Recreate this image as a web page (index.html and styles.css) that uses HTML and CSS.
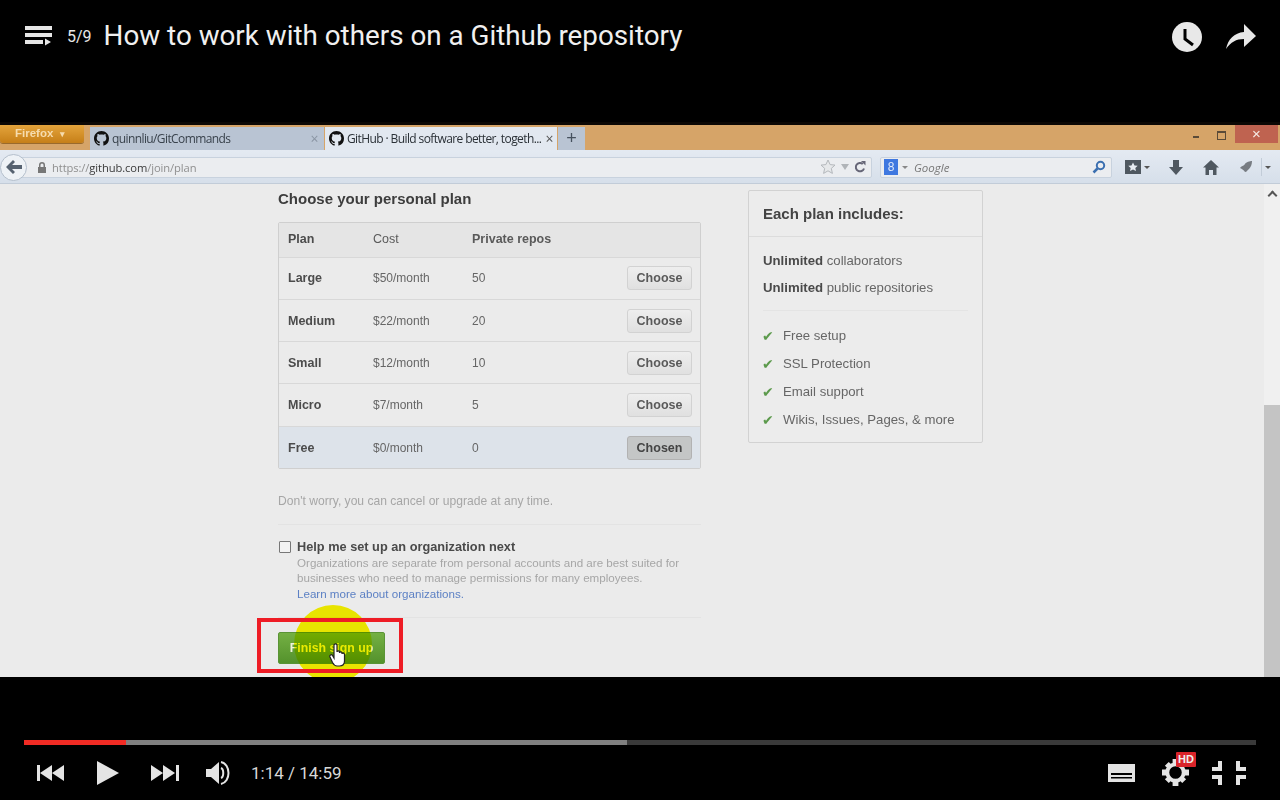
FILE: index.html
```html
<!DOCTYPE html>
<html lang="en">
<head>
    <meta charset="UTF-8">
    <title>How to work with others on a Github repository</title>
    <link rel="stylesheet" href="styles.css">
</head>
<body>
    <!-- Top bar -->
    <header class="top-bar">
        <svg class="playlist-icon" width="28" height="20" viewBox="0 0 28 20"><path fill="#e6e6e6" d="M0 0h27v4H0zM0 7h27v4H0zM0 14h18v4H0zM20 12.500l6 3.500-6 3.500z"/></svg>
        <span class="playlist-count">5/9</span>
        <h1 class="video-title">How to work with others on a Github repository</h1>
        <div class="top-actions">
            <svg width="30" height="30" viewBox="0 0 30 30"><circle cx="15" cy="15" r="15" fill="#e8e8e8"/><path fill="none" stroke="#000" stroke-width="3" d="M13 7v10l8 6"/></svg>
            <svg width="30" height="26" viewBox="0 0 30 26"><path fill="#e8e8e8" d="M0 25C2 15 8 9 18 8V0l12 12-12 11v-8C10 15 5 18 0 25z"/></svg>
        </div>
    </header>

    <!-- Video frame -->
    <main class="video">
        <div class="browser-frame">
            <div class="title-bar">
                <div class="firefox-btn">Firefox <span class="caret">&#9662;</span></div>
                <div class="tab tab-inactive">
                    <svg class="octocat" viewBox="0 0 16 16"><path d="M8 0C3.580 0 0 3.580 0 8c0 3.540 2.290 6.530 5.470 7.590.4.070.55-.17.55-.38 0-.19-.01-.82-.01-1.490-2.010.37-2.530-.49-2.690-.94-.09-.23-.48-.94-.82-1.130-.28-.15-.68-.52-.01-.53.63-.01 1.080.58 1.230.82.72 1.210 1.870.87 2.330.66.070-.52.28-.87.51-1.070-1.780-.2-3.640-.89-3.640-3.950 0-.87.31-1.590.82-2.150-.08-.2-.36-1.020.08-2.120 0 0 .67-.21 2.200.82.64-.18 1.320-.27 2-.27s1.360.09 2 .27c1.530-1.040 2.200-.82 2.200-.82.44 1.100.16 1.920.08 2.120.51.56.82 1.270.82 2.150 0 3.070-1.870 3.750-3.650 3.950.29.25.54.73.54 1.480 0 1.070-.01 1.930-.01 2.200 0 .21.15.46.55.38A8.010 8.010 0 0 0 16 8c0-4.420-3.580-8-8-8z"/></svg>
                    <span class="tab-label">quinnliu/GitCommands</span>
                    <span class="tab-close dim">&times;</span>
                </div>
                <div class="tab tab-active">
                    <svg class="octocat" viewBox="0 0 16 16"><path d="M8 0C3.580 0 0 3.580 0 8c0 3.540 2.290 6.530 5.470 7.590.4.070.55-.17.55-.38 0-.19-.01-.82-.01-1.490-2.010.37-2.530-.49-2.690-.94-.09-.23-.48-.94-.82-1.130-.28-.15-.68-.52-.01-.53.63-.01 1.080.58 1.230.82.72 1.210 1.870.87 2.330.66.070-.52.28-.87.51-1.070-1.780-.2-3.640-.89-3.640-3.950 0-.87.31-1.590.82-2.150-.08-.2-.36-1.020.08-2.120 0 0 .67-.21 2.200.82.64-.18 1.320-.27 2-.27s1.360.09 2 .27c1.530-1.040 2.200-.82 2.200-.82.44 1.100.16 1.920.08 2.120.51.56.82 1.270.82 2.150 0 3.070-1.870 3.750-3.650 3.950.29.25.54.73.54 1.480 0 1.070-.01 1.930-.01 2.200 0 .21.15.46.55.38A8.010 8.010 0 0 0 16 8c0-4.420-3.580-8-8-8z"/></svg>
                    <span class="tab-label">GitHub &middot; Build software better, togeth...</span>
                    <span class="tab-close">&times;</span>
                </div>
                <div class="tab-new">+</div>
                <div class="window-controls">
                    <span class="win-min"></span>
                    <span class="win-restore"></span>
                    <span class="win-close">&times;</span>
                </div>
            </div>

            <div class="nav-bar">
                <div class="back-btn">
                    <svg width="16" height="14" viewBox="0 0 16 14"><path fill="#566270" d="M7 0l2 2-3 3h10v4H6l3 3-2 2-7-7z"/></svg>
                </div>
                <div class="url-bar">
                    <svg width="10" height="11" viewBox="0 0 10 11"><path fill="#777" d="M2 5V3a3 3 0 0 1 6 0v2h1v6H1V5zm1.500 0h3V3a1.500 1.500 0 0 0-3 0z"/></svg>
                    <span class="url-text">https://<b>github.com</b>/join/plan</span>
                    <div class="url-icons">
                        <svg width="16" height="16" viewBox="0 0 16 16"><path fill="#e6e8ea" stroke="#b4b8bc" d="M8 1l2.100 4.600 4.900.5-3.700 3.300 1.100 5L8 11.800l-4.400 2.600 1.100-5L1 6.100l4.900-.5z"/></svg>
                        <span class="url-arrow"></span>
                        <svg width="12" height="12" viewBox="0 0 12 12"><path fill="none" stroke="#667" stroke-width="2" d="M10 7.500A4.200 4.200 0 1 1 8.800 3"/><path fill="#667" d="M7 0l4.500 0v4.500z"/></svg>
                    </div>
                </div>
                <div class="search-bar">
                    <span class="search-logo">8</span>
                    <span class="search-caret"></span>
                    <span class="search-text">Google</span>
                    <svg class="search-icon" width="14" height="14" viewBox="0 0 14 14"><circle cx="8.500" cy="5.500" r="3.700" fill="none" stroke="#3b6fb0" stroke-width="2"/><path stroke="#3b6fb0" stroke-width="2.500" d="M5.500 8.500L1.500 12.500"/></svg>
                </div>
                <div class="toolbar-icons">
                    <svg class="bookmarks-icon" width="16" height="14" viewBox="0 0 16 14"><path fill="#4f5860" d="M0 0h16v14H0z"/><path fill="#e8edf2" d="M8 2.500l1.500 3 3.200.3-2.400 2.100.7 3.100L8 9.400 5 11l.7-3.100-2.400-2.100 3.200-.3z"/></svg>
                    <span class="tool-caret"></span>
                    <svg class="download-icon" width="14" height="15" viewBox="0 0 14 15"><path fill="#4f5860" d="M4 0h6v7h4l-7 8-7-8h4z"/></svg>
                    <svg class="home-icon" width="16" height="15" viewBox="0 0 16 15"><path fill="#4f5860" d="M8 0l8 7.500h-2.500V15h-3.500v-5H6v5H2.500V7.500H0z"/></svg>
                    <svg class="ext-icon" width="16" height="14" viewBox="0 0 16 14"><path fill="#777c82" d="M3 8c1-2 4-2 5-4 1-2 5-3 7-3 0 3-1 6-3 8-2 1-2 3-4 3-1-2-3-3-5-4z"/></svg>
                    <span class="tool-sep"></span>
                    <span class="tool-caret"></span>
                </div>
            </div>

            <div class="page">
                <div class="page-content">
                    <section class="plan-col">
                        <h2 class="plan-heading">Choose your personal plan</h2>
                        <div class="plan-table">
                            <div class="plan-row plan-head">
                                <span class="col-plan">Plan</span>
                                <span class="col-cost">Cost</span>
                                <span class="col-repos">Private repos</span>
                            </div>
                            <div class="plan-row">
                                <span class="col-plan">Large</span>
                                <span class="col-cost">$50/month</span>
                                <span class="col-repos">50</span>
                                <button class="choose-btn">Choose</button>
                            </div>
                            <div class="plan-row">
                                <span class="col-plan">Medium</span>
                                <span class="col-cost">$22/month</span>
                                <span class="col-repos">20</span>
                                <button class="choose-btn">Choose</button>
                            </div>
                            <div class="plan-row">
                                <span class="col-plan">Small</span>
                                <span class="col-cost">$12/month</span>
                                <span class="col-repos">10</span>
                                <button class="choose-btn">Choose</button>
                            </div>
                            <div class="plan-row">
                                <span class="col-plan">Micro</span>
                                <span class="col-cost">$7/month</span>
                                <span class="col-repos">5</span>
                                <button class="choose-btn">Choose</button>
                            </div>
                            <div class="plan-row plan-free">
                                <span class="col-plan">Free</span>
                                <span class="col-cost">$0/month</span>
                                <span class="col-repos">0</span>
                                <button class="choose-btn chosen">Chosen</button>
                            </div>
                        </div>
                        <p class="plan-note">Don't worry, you can cancel or upgrade at any time.</p>
                        <div class="org-block">
                            <span class="org-check"></span>
                            <div class="org-text">
                                <strong>Help me set up an organization next</strong>
                                <p>Organizations are separate from personal accounts and are best suited for businesses who need to manage permissions for many employees.</p>
                                <a href="#">Learn more about organizations.</a>
                            </div>
                        </div>
                        <div class="finish-wrap">
                            <button class="finish-btn">Finish sign up</button>
                            <span class="click-spot"></span>
                            <span class="red-box"></span>
                            <svg class="hand-cursor" width="18" height="24" viewBox="0 0 18 24"><path fill="#fff" stroke="#222" stroke-width="1.200" d="M5 2c0-1.500 3-1.500 3 0v7c0-1.500 2.500-1.500 2.500 0v1c0-1.500 2.500-1.500 2.500 0v1c0-1.200 2.500-1.200 2.500 .5V18c0 3-2 5-5 5H8c-2.500 0-3.500-1.500-4.500-3.500L1 14c-.8-2 1.500-3 2.500-1.500L5 15z"/></svg>
                        </div>
                    </section>

                    <aside class="includes-card">
                        <h3 class="includes-title">Each plan includes:</h3>
                        <div class="includes-body">
                            <p><b>Unlimited</b> collaborators</p>
                            <p><b>Unlimited</b> public repositories</p>
                        </div>
                        <ul class="includes-list">
                            <li>Free setup</li>
                            <li>SSL Protection</li>
                            <li>Email support</li>
                            <li>Wikis, Issues, Pages, &amp; more</li>
                        </ul>
                    </aside>
                </div>
                <div class="scrollbar">
                    <span class="scroll-up"></span>
                    <span class="scroll-thumb"></span>
                </div>
            </div>
        </div>
    </main>

    <!-- Player controls -->
    <footer class="controls">
        <div class="progress">
            <div class="progress-loaded"></div>
            <div class="progress-played"></div>
        </div>
        <div class="control-row">
            <svg class="ctl-prev" width="28" height="16" viewBox="0 0 28 16"><path fill="#e4e4e4" d="M0 0h3v16H0zM3 8l12-8v16zM15 8l12-8v16z"/></svg>
            <svg class="ctl-play" width="22" height="24" viewBox="0 0 22 24"><path fill="#e4e4e4" d="M0 0l22 12L0 24z"/></svg>
            <svg class="ctl-next" width="28" height="16" viewBox="0 0 28 16"><path fill="#e4e4e4" d="M0 0l12 8-12 8zM12 0l12 8-12 8zM25 0h3v16h-3z"/></svg>
            <svg class="ctl-volume" width="25" height="24" viewBox="0 0 25 24"><path fill="#e4e4e4" d="M0 8h5l8-7v22l-8-7H0z"/><path fill="none" stroke="#e4e4e4" stroke-width="2" d="M15 7c3 1 3 9 0 10M15 1c10 2 10 20 0 22"/></svg>
            <span class="time">1:14 / 14:59</span>
            <div class="control-right">
                <svg class="ctl-captions" width="27" height="18" viewBox="0 0 27 18"><path fill="#e4e4e4" d="M0 0h27v18H0z"/><path fill="#000" d="M3 9h21v2H3zM3 13h21v1.500H3z"/></svg>
                <div class="settings">
                    <svg width="27" height="27" viewBox="0 0 28 28"><g fill="#e4e4e4"><path d="M11 0h6v5h-6zM11 23h6v5h-6zM0 11h5v6H0zM23 11h5v6h-5z"/><path d="M3 7l4-4 4 4-4 4zM17 7l4-4 4 4-4 4zM3 21l4-4 4 4-4 4zM17 21l4-4 4 4-4 4z"/></g><circle cx="14" cy="14" r="8.500" fill="none" stroke="#e4e4e4" stroke-width="4"/></svg>
                    <span class="hd-badge">HD</span>
                </div>
                <svg width="34" height="24" viewBox="0 0 34 24"><path fill="#e4e4e4" d="M6 0h4v10H0V6h6zM24 0h4v6h6v4H24zM0 14h10v10H6v-6H0zM24 14h10v4h-6v6h-4z"/></svg>
            </div>
        </div>
    </footer>
</body>
</html>
```

FILE: styles.css
```css
* {
    box-sizing: border-box;
}

body {
    margin: 0;
    width: 1280px;
    height: 800px;
    overflow: hidden;
    background: #000;
    font-family: 'Liberation Sans', Arial, sans-serif;
    display: flex;
    flex-direction: column;
}

/* Top bar */
.top-bar {
    height: 122px;
    flex: none;
    display: flex;
    align-items: flex-start;
    padding: 18px 24px 0 25px;
    color: #e8e8e8;
    font-family: Roboto, sans-serif;
}

.playlist-icon {
    margin-top: 8px;
}

.playlist-count {
    margin: 9px 0 0 14px;
    font-size: 16px;
    line-height: 19px;
}

.video-title {
    margin: 1px 0 0 12px;
    font-size: 27.800px;
    font-weight: 400;
    line-height: 34px;
    color: #f0f0f0;
}

.top-actions {
    margin-left: auto;
    display: flex;
    align-items: center;
    gap: 24px;
    padding-top: 4px;
}

/* Video frame */
.video {
    height: 555px;
    flex: none;
    padding-top: 3px;
    background: #0c0805;
}

.browser-frame {
    height: 552px;
    display: flex;
    flex-direction: column;
    filter: blur(0.5px);
}

.title-bar {
    height: 25px;
    flex: none;
    display: flex;
    align-items: flex-start;
    background: #d6a468;
}

.firefox-btn {
    width: 84px;
    height: 18px;
    padding-left: 15px;
    background: linear-gradient(#e4a43c, #c67f18);
    border-radius: 0 0 3px 3px;
    box-shadow: 0 1px 0 #9a6a2c;
    color: #f6dcae;
    font-size: 11.500px;
    font-weight: 700;
    line-height: 17px;
}

.caret {
    margin-left: 3px;
    font-size: 9px;
}

.tab {
    height: 23px;
    margin-top: 2px;
    display: flex;
    align-items: center;
    padding: 0 4px 0 4px;
    font-size: 12px;
    color: #39424c;
    font-family: 'Open Sans', sans-serif;
    letter-spacing: -0.6px;
}

.tab-inactive {
    width: 234px;
    margin-left: 6px;
    padding-right: 6px;
    background: #b9c4d3;
}

.tab-active {
    width: 232px;
    margin-left: 1px;
    background: #e2e8f0;
    color: #2a3036;
}

.octocat {
    width: 15px;
    height: 15px;
    flex: none;
    fill: #111;
}

.tab-label {
    margin-left: 3px;
    white-space: nowrap;
}

.tab-close {
    margin-left: auto;
    font-size: 14px;
    color: #555;
}

.tab-close.dim {
    color: #8a95a3;
}

.tab-new {
    width: 27px;
    height: 23px;
    margin: 2px 0 0 1px;
    background: #b9c4d3;
    color: #46515e;
    font-size: 18px;
    line-height: 22px;
    text-align: center;
}

.window-controls {
    margin-left: auto;
    margin-right: 2px;
    display: flex;
    align-items: flex-start;
}

.win-min {
    width: 6px;
    height: 2px;
    margin-top: 11px;
    background: #5a4a38;
}

.win-restore {
    width: 9px;
    height: 9px;
    margin: 6px 9px 0 18px;
    border: 1px solid #5a4a38;
    border-top-width: 2px;
}

.win-close {
    width: 43px;
    height: 18px;
    background: #bf6350;
    color: #f6ece6;
    font-size: 15px;
    line-height: 17px;
    text-align: center;
}

.nav-bar {
    height: 34px;
    flex: none;
    display: flex;
    align-items: center;
    padding: 1px 8px 0 0;
    background: linear-gradient(#e4eaf2, #d6dfea);
    border-bottom: 1px solid #c2ccd8;
}

.back-btn {
    width: 27px;
    height: 27px;
    margin-right: -12px;
    z-index: 1;
    flex: none;
    display: flex;
    align-items: center;
    justify-content: center;
    background: #eef2f6;
    border: 1px solid #b4bfcc;
    border-radius: 50%;
}

.url-bar {
    width: 857px;
    height: 21px;
    display: flex;
    align-items: center;
    padding: 0 5px 0 21px;
    background: #ebedf0;
    border: 1px solid #c8d2de;
    border-radius: 2px;
    font-family: 'Open Sans', sans-serif;
    font-size: 11.200px;
    letter-spacing: -0.1px;
    color: #8f8f8f;
}

.url-text {
    margin-left: 5px;
}

.url-text b {
    font-weight: 400;
    color: #3a3a3a;
}

.url-icons {
    margin-left: auto;
    display: flex;
    align-items: center;
    gap: 5px;
}

.url-arrow {
    width: 0;
    height: 0;
    border: 4px solid transparent;
    border-top: 6px solid #b0b4b8;
    border-bottom: 0;
}

.search-bar {
    width: 232px;
    height: 21px;
    margin-left: 8px;
    display: flex;
    align-items: center;
    padding: 0 5px 0 3px;
    background: #ebedf0;
    border: 1px solid #c8d2de;
    border-radius: 2px;
}

.search-logo {
    width: 14px;
    height: 16px;
    background: #3f78e0;
    color: #dfe9fa;
    font-size: 12px;
    line-height: 16px;
    text-align: center;
}

.search-caret,
.tool-caret {
    width: 0;
    height: 0;
    border: 3px solid transparent;
    border-top: 3px solid #555;
    border-bottom: 0;
}

.search-caret {
    margin-left: 4px;
    border-top-color: #888;
}

.search-text {
    margin-left: 6px;
    font-family: 'Open Sans', sans-serif;
    font-size: 11.500px;
    font-style: italic;
    color: #777;
}

.search-icon {
    margin-left: auto;
}

.toolbar-icons {
    margin-left: 13px;
    display: flex;
    align-items: center;
    flex: 1;
}

.toolbar-icons .tool-caret {
    margin-left: 3px;
}

.download-icon {
    margin-left: 19px;
}

.home-icon {
    margin-left: 20px;
}

.ext-icon {
    margin-left: 18px;
}

.tool-sep {
    width: 1px;
    height: 18px;
    margin-left: 8px;
    background: #c2ccd8;
}

.page {
    flex: 1;
    min-height: 0;
    display: flex;
    overflow: hidden;
    background: #ebebeb;
}

.page-content {
    flex: 1;
    display: flex;
    align-items: flex-start;
    padding-left: 278px;
    color: #555;
}

/* Plan column */
.plan-col {
    width: 423px;
    flex: none;
}

.plan-heading {
    margin: 0;
    padding-top: 6px;
    font-size: 15px;
    line-height: 17px;
    color: #3d3d3d;
}

.plan-table {
    margin-top: 15px;
    border: 1px solid #cfcfcf;
    border-radius: 2px;
    font-size: 12px;
}

.plan-row {
    height: 42.300px;
    display: flex;
    align-items: center;
    padding: 0 8px 0 9px;
    border-top: 1px solid #d8d8d8;
}

.plan-head {
    height: 33.600px;
    padding-bottom: 2px;
    border-top: 0;
    background: #e5e5e5;
    color: #555;
}

.plan-free {
    height: 42.700px;
    background: #dde3ea;
}

.col-plan {
    width: 85px;
    font-weight: 700;
    font-size: 12.500px;
    color: #4c4c4c;
}

.col-cost {
    width: 99px;
    color: #666;
}

.plan-head .col-cost,
.plan-head .col-repos {
    font-weight: 700;
    font-size: 12.500px;
    color: #5a5a5a;
}

.plan-head .col-cost {
    font-weight: 400;
}

.col-repos {
    color: #666;
}

.choose-btn {
    width: 65px;
    height: 24px;
    margin-left: auto;
    padding: 0;
    background: linear-gradient(#eeeeee, #e0e0e0);
    border: 1px solid #d2d2d2;
    border-radius: 3px;
    font-family: inherit;
    font-size: 12.500px;
    font-weight: 700;
    color: #5a5a5a;
}

.chosen {
    background: #c4c6c6;
    border-color: #b2b2b2;
    color: #444;
}

.plan-note {
    margin: 25px 0 0;
    padding-bottom: 16px;
    border-bottom: 1px solid #e3e3e3;
    font-size: 12.100px;
    line-height: 14px;
    color: #a6a6a6;
}

.org-block {
    margin-top: 15px;
    padding-bottom: 15px;
    display: flex;
    border-bottom: 1px solid #e3e3e3;
}

.org-check {
    width: 12px;
    height: 12px;
    margin: 1px 6px 0 1px;
    flex: none;
    background: #f2f2f2;
    border: 1px solid #777;
    border-radius: 1px;
}

.org-text {
    height: 62px;
    font-size: 11.600px;
    line-height: 15.500px;
    color: #a6a6a6;
}

.org-text strong {
    display: block;
    font-size: 12.750px;
    line-height: 14.500px;
    color: #4a4a4a;
}

.org-text p {
    margin: 0;
}

.org-text a {
    color: #5c80c4;
    text-decoration: none;
}

/* Finish button and screencast highlight */
.finish-wrap {
    position: relative;
    margin-top: 14px;
    height: 32px;
}

.finish-btn {
    width: 107px;
    height: 32px;
    padding: 0;
    background: linear-gradient(#74b044, #54922c);
    border: 1px solid #5a9436;
    border-radius: 2px;
    font-family: inherit;
    font-size: 12.300px;
    font-weight: 700;
    color: #eef2dc;
}

/* yellow multiplied over the page, so the button and its label tint through */
.click-spot {
    position: absolute;
    left: 16px;
    top: -27px;
    width: 78px;
    height: 78px;
    border-radius: 50%;
    background: #fcf800;
    mix-blend-mode: multiply;
}

.red-box {
    position: absolute;
    left: -21px;
    top: -14px;
    width: 146px;
    height: 55px;
    border: 4px solid #ee1c25;
}

.hand-cursor {
    position: absolute;
    left: 51px;
    top: 11px;
}

/* Each plan card */
.includes-card {
    width: 235px;
    height: 253px;
    margin: 6px 0 0 47px;
    flex: none;
    background: #ececec;
    border: 1px solid #d2d2d2;
    border-radius: 2px;
    font-size: 13.200px;
    color: #666;
}

.includes-title {
    margin: 0;
    height: 46px;
    padding: 14px 0 0 14px;
    border-bottom: 1px solid #dcdcdc;
    font-size: 15px;
    line-height: 17px;
    color: #444;
}

.includes-body {
    margin: 0 14px;
    padding: 10px 0 9px;
    border-bottom: 1px solid #e4e4e4;
}

.includes-body p {
    margin: 0;
    line-height: 27px;
}

.includes-body b {
    color: #4a4a4a;
}

.includes-list {
    margin: 0;
    padding: 11px 0 0 34px;
    list-style: none;
}

.includes-list li {
    position: relative;
    line-height: 28px;
}

.includes-list li::before {
    content: "\2714";
    position: absolute;
    left: -21px;
    font-family: 'DejaVu Sans', sans-serif;
    font-size: 14px;
    color: #5c9a4c;
}

.scrollbar {
    width: 16px;
    flex: none;
    display: flex;
    flex-direction: column;
    background: #f0f0f0;
}

.scroll-up {
    width: 7px;
    height: 7px;
    margin: 8px auto 0;
    border-top: 2px solid #555;
    border-left: 2px solid #555;
    transform: rotate(45deg);
}

.scroll-thumb {
    margin-top: auto;
    height: 272px;
    background: #c4c4c4;
}

/* Player controls */
.controls {
    flex: 1;
    padding: 63px 24px 0;
}

.progress {
    position: relative;
    height: 5px;
    background: #3a3a3a;
}

.progress-loaded {
    width: 603px;
    height: 5px;
    background: #808080;
}

.progress-played {
    position: absolute;
    top: 0;
    left: 0;
    width: 102px;
    height: 5px;
    background: #f12b24;
}

.control-row {
    height: 55px;
    display: flex;
    align-items: center;
    padding-left: 13px;
}

.ctl-play {
    margin-left: 32px;
}

.ctl-next {
    margin-left: 32px;
}

.ctl-volume {
    margin-left: 27px;
}

.time {
    margin-left: 20px;
    font-family: Roboto, sans-serif;
    font-size: 17px;
    color: #d8d8d8;
}

.control-right {
    margin-left: auto;
    margin-right: 10px;
    display: flex;
    align-items: center;
    gap: 23px;
}

.ctl-captions {
    margin-right: 4px;
}

.settings {
    position: relative;
    height: 27px;
}

.hd-badge {
    position: absolute;
    top: -7px;
    left: 14px;
    width: 20px;
    height: 15px;
    background: #d9242a;
    border-radius: 1px;
    color: #eee;
    font-size: 11px;
    font-weight: 700;
    line-height: 15px;
    text-align: center;
}
```
